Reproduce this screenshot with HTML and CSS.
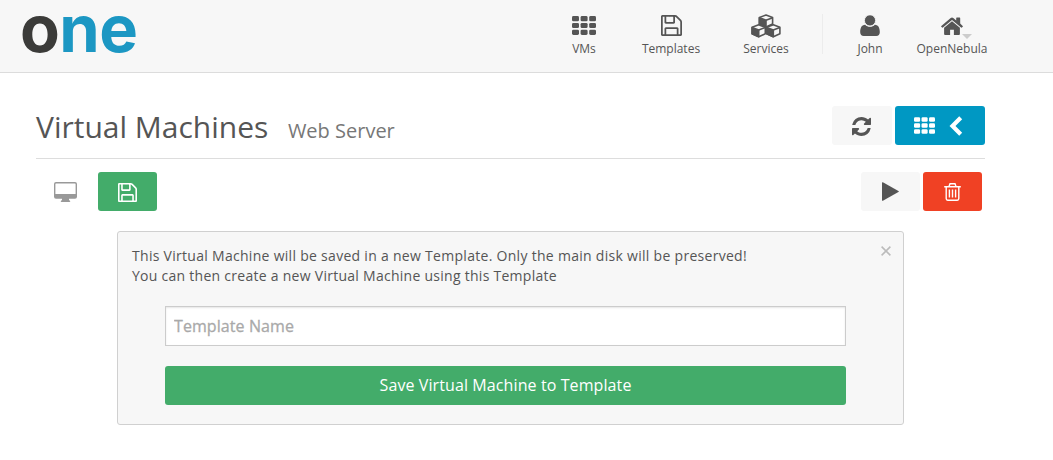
FILE: index.html
```html
<!DOCTYPE html>
<html lang="en">
<head>
<meta charset="utf-8">
<title>Virtual Machines</title>
<link rel="stylesheet" href="styles.css">
</head>
<body>
<svg width="0" height="0" class="defs">
  <symbol id="grid" viewBox="0 0 24 19">
    <g fill="currentColor">
      <rect width="7" height="5.3" rx="1.4"/><rect x="8.6" width="7" height="5.3" rx="1.4"/><rect x="17.2" width="6.8" height="5.3" rx="1.4"/>
      <rect y="6.9" width="7" height="5.2" rx="1.4"/><rect x="8.6" y="6.9" width="7" height="5.2" rx="1.4"/><rect x="17.2" y="6.9" width="6.8" height="5.2" rx="1.4"/>
      <rect y="13.7" width="7" height="5.3" rx="1.4"/><rect x="8.6" y="13.7" width="7" height="5.3" rx="1.4"/><rect x="17.2" y="13.7" width="6.8" height="5.3" rx="1.4"/>
    </g>
  </symbol>
  <symbol id="floppy" viewBox="0 0 1536 1536">
    <path fill="currentColor" fill-rule="evenodd" d="M384 1408h768v-384H384zM1280 1408h128V512q0-14-10-38.500t-20-34.500l-281-281q-10-10-34-20t-39-10v416q0 40-28 68t-68 28H352q-40 0-68-28t-28-68V128H128v1280h128V992q0-40 28-68t68-28h832q40 0 68 28t28 68zM896 480V160q0-13-9.500-22.500T864 128H672q-13 0-22.500 9.500T640 160v320q0 13 9.500 22.500T672 512h192q13 0 22.500-9.500T896 480zM1536 512v928q0 40-28 68t-68 28H96q-40 0-68-28t-28-68V96q0-40 28-68T96 0h928q40 0 88 20t76 48l280 280q28 28 48 76t20 88zM384 128v352q0 32 32 32h224V128z"/>
  </symbol>
  <symbol id="cubes" viewBox="0 0 30 24">
    <g stroke="currentColor" stroke-width="1.6" stroke-linejoin="round">
      <path fill="#f7f7f7" d="M15 1l6.600 2.500v6.500L15 13 8.400 10V3.500z"/><path fill="currentColor" d="M8.400 3.700L15 6.200v6.800l-6.600-3z"/><path fill="none" d="M15 6.200l6.600-2.500"/>
      <path fill="#f7f7f7" d="M7.700 10.800l6.600 2.500v6.500l-6.600 3-6.600-3v-6.500z"/><path fill="currentColor" d="M1.100 13.500l6.600 2.500v6.800l-6.600-3z"/><path fill="none" d="M7.700 16l6.600-2.500"/>
      <path fill="#f7f7f7" d="M22.300 10.800l6.600 2.500v6.500l-6.600 3-6.600-3v-6.500z"/><path fill="currentColor" d="M15.700 13.500l6.600 2.500v6.800l-6.600-3z"/><path fill="none" d="M22.300 16l6.600-2.500"/>
    </g>
  </symbol>
  <symbol id="user" viewBox="0 0 20 21">
    <path fill="currentColor" d="M5.200 9.700C6.400 11 8 11.800 10 11.800s3.600-.8 4.800-2.100c3.800.1 5 3.500 5 7.600 0 2.300-1.300 3.700-3.500 3.700H3.700C1.500 21 .2 19.600.2 17.300c0-4.100 1.200-7.500 5-7.600z"/>
    <circle cx="10" cy="5.400" r="5.600" fill="currentColor" stroke="#f7f7f7" stroke-width=".9"/>
  </symbol>
  <symbol id="home" viewBox="0 0 22 18">
    <path fill="currentColor" d="M11 4.300l7.900 6.500V17q0 1-1 1h-5v-5.300H9.100V18h-5q-1 0-1-1v-6.200z"/>
    <path fill="currentColor" d="M.3 9l9.400-7.900q1.300-1 2.600 0l2.900 2.500V1.200q0-.6.600-.6h2.800q.6 0 .6.600v5.200L21.700 9q.4.400 0 .8l-.8.800q-.4.300-.8 0L11 3 1.900 10.600q-.4.300-.8 0l-.8-.8q-.4-.4 0-.8z"/>
  </symbol>
  <symbol id="refresh" viewBox="0 0 1536 1536">
    <path fill="currentColor" d="M1511 928q0 5-1 7-64 268-268 434.500T764 1536q-146 0-282.500-55T238 1324l-129 129q-19 19-45 19t-45-19-19-45V960q0-26 19-45t45-19h448q26 0 45 19t19 45-19 45l-137 137q71 66 161 102t187 36q134 0 250-65t186-179q11-17 53-117 8-23 30-23h192q13 0 22.500 9.500t9.500 22.500zM1536 128v448q0 26-19 45t-45 19h-448q-26 0-45-19t-19-45 19-45l138-138Q969 256 768 256q-134 0-250 65T332 500q-11 17-53 117-8 23-30 23H50q-13 0-22.500-9.500T18 608v-7q65-268 270-434.500T768 0q146 0 284 55.500T1297 212l130-129q19-19 45-19t45 19 19 45z"/>
  </symbol>
  <symbol id="chevron" viewBox="0 0 14 20">
    <path fill="none" stroke="currentColor" stroke-width="4.200" d="M11.700 1.800L3.500 10l8.200 8.200"/>
  </symbol>
  <symbol id="desktop" viewBox="0 0 23 20">
    <path fill="currentColor" fill-rule="evenodd" d="M2 0h19q2 0 2 2v12.700q0 2-2 2h-6v1.300l1.200 1q.3 1-.7 1h-8q-1 0-.7-1L8 18v-1.300H2q-2 0-2-2V2q0-2 2-2zM2 1.400q-.6 0-.6.600v10h20.200V2q0-.6-.6-.6z"/>
  </symbol>
  <symbol id="play" viewBox="0 0 17 19">
    <path fill="currentColor" d="M0 .8Q0-.1.900.300l15.500 8.600q.9.600 0 1.200L.9 18.700q-.9.400-.9-.5z"/>
  </symbol>
  <symbol id="trash" viewBox="0 0 17 18">
    <g fill="none" stroke="currentColor" stroke-width="1.400">
      <path d="M.2 3.800h16.600M5 3.600L6 .8h5l1 2.800M2.200 4v11.600q0 1.700 1.500 1.700h9.600q1.500 0 1.500-1.700V4"/>
      <path d="M5.400 6.500v8M8.500 6.500v8M11.600 6.500v8"/>
    </g>
  </symbol>
  <symbol id="cross" viewBox="0 0 10 10">
    <path fill="none" stroke="currentColor" stroke-width="1.500" d="M.6.600l8.800 8.800M9.400.600L.6 9.400"/>
  </symbol>
</svg>

<header class="topbar">
  <div class="logo"><span class="logo-o">o</span><span class="logo-n">n</span><span class="logo-e">e</span></div>
  <nav class="nav">
    <a class="nav-item vms"><span class="nav-icon"><svg width="24" height="19"><use href="#grid"/></svg></span><span>VMs</span></a>
    <a class="nav-item templates"><span class="nav-icon"><svg width="21" height="21"><use href="#floppy"/></svg></span><span>Templates</span></a>
    <a class="nav-item services"><span class="nav-icon"><svg width="30" height="24"><use href="#cubes"/></svg></span><span>Services</span></a>
    <span class="divider"></span>
    <a class="nav-item user"><span class="nav-icon"><svg width="20" height="21"><use href="#user"/></svg></span><span>John</span></a>
    <a class="nav-item zone"><span class="nav-icon"><svg width="22" height="18"><use href="#home"/></svg><i class="caret"></i></span><span>OpenNebula</span></a>
  </nav>
</header>

<main class="page">
  <div class="heading">
    <h1 class="title">Virtual Machines</h1>
    <span class="subtitle">Web Server</span>
    <div class="actions">
      <button class="btn light refresh"><svg width="19" height="19"><use href="#refresh"/></svg></button>
      <button class="btn blue"><svg width="21" height="17"><use href="#grid"/></svg><svg width="14" height="20"><use href="#chevron"/></svg></button>
    </div>
  </div>
  <div class="toolbar">
    <svg class="desktop" width="23" height="20"><use href="#desktop"/></svg>
    <button class="btn green"><svg width="19" height="19"><use href="#floppy"/></svg></button>
    <div class="actions">
      <button class="btn light"><svg width="17" height="19"><use href="#play"/></svg></button>
      <button class="btn red"><svg width="17" height="18"><use href="#trash"/></svg></button>
    </div>
  </div>
  <section class="panel">
    <div class="panel-head">
      <p class="message">This Virtual Machine will be saved in a new Template. Only the main disk will be preserved!<br><span class="second">You can then create a new Virtual Machine using this Template</span></p>
      <svg class="close" width="10" height="10"><use href="#cross"/></svg>
    </div>
    <input class="field" type="text" placeholder="Template Name">
    <button class="btn save">Save Virtual Machine to Template</button>
  </section>
</main>
</body>
</html>
```

FILE: styles.css
```css
* { box-sizing: border-box; }
body { margin: 0; background: #fff; color: #555; font-family: "Open Sans", sans-serif; }
svg { display: block; flex: none; }
.defs { position: absolute; }
.topbar { display: flex; justify-content: space-between; height: 73px; padding: 0 61px 0 20px; background: #f7f7f7; border-bottom: 1px solid #dcdcdc; }
.logo { display: flex; height: 57px; font: 700 65px/57px Inter, sans-serif; letter-spacing: -.6px; color: #1c97c3; }
.logo-o { color: #3b3b39; }
.nav { display: flex; font-size: 12px; white-space: nowrap; }
.nav-item { display: flex; flex-direction: column; align-items: center; line-height: 16px; padding-top: 11px; }
.nav-item > span:last-child { padding-top: 1px; }
.nav-icon { position: relative; display: flex; align-items: center; justify-content: center; height: 29px; }
.vms { width: 60px; }
.vms .nav-icon { padding-bottom: 1px; }
.templates { width: 114px; }
.services { width: 76px; }
.divider { width: 1px; height: 40px; margin: 14px 23px 0 18px; background: #ececec; }
.user { width: 48px; }
.zone { width: 80px; margin-left: 18px; }
.caret { position: absolute; left: 21px; top: 23px; border: 5px solid transparent; border-top-color: #ccc; border-bottom: 0; }
.page { width: 949px; margin-left: 36px; }
.heading { display: flex; align-items: baseline; height: 86px; padding-top: 33px; border-bottom: 1px solid #ddd; }
.title { margin: 0; font-size: 30px; line-height: 42px; font-weight: 400; }
.subtitle { margin-left: 19.500px; font-size: 20px; color: #777; }
.actions { display: flex; gap: 3px; margin-left: auto; align-self: flex-start; }
.btn { display: flex; align-items: center; justify-content: center; width: 59px; height: 39px; padding: 0; border: 0; border-radius: 3px; color: #fff; font-family: inherit; }
.light { background: #f7f7f7; color: #555; }
.refresh { width: 60px; padding: 2px 2px 0 0; }
.blue { width: 90px; gap: 14px; padding-right: 4px; background: #0098c3; }
.green, .save { background: #43ac6a; }
.green { padding-top: 2px; }
.red { background: #f04124; }
.toolbar { display: flex; align-items: center; padding: 13px 3px 0 18px; }
.desktop { color: #999; margin-right: 21px; }
.panel { width: 787px; height: 194px; margin: 20px 0 0 81px; padding: 14px; border: 1px solid #d0d0d0; border-radius: 3px; background: #f7f7f7; }
.panel-head { display: flex; justify-content: space-between; height: 60px; }
.message { margin: 0; font-size: 14px; line-height: 20px; letter-spacing: .29px; white-space: nowrap; }
.second { letter-spacing: .27px; }
.close { margin: 0 -2px 0 0; color: #bbb; }
.field { display: block; width: 681px; height: 40px; margin-left: 33px; padding: 0 8px; border: 1px solid #ccc; border-radius: 0; background: #fff; box-shadow: inset 0 1px 2px rgba(0,0,0,.1); font: 16px "Open Sans", sans-serif; letter-spacing: .08px; }
.field::placeholder { color: #a9a9a9; opacity: 1; -webkit-text-stroke: .3px #a9a9a9; }
.save { width: 681px; margin: 20px 0 0 33px; padding-bottom: 2px; font-size: 16px; letter-spacing: .1px; }
```
